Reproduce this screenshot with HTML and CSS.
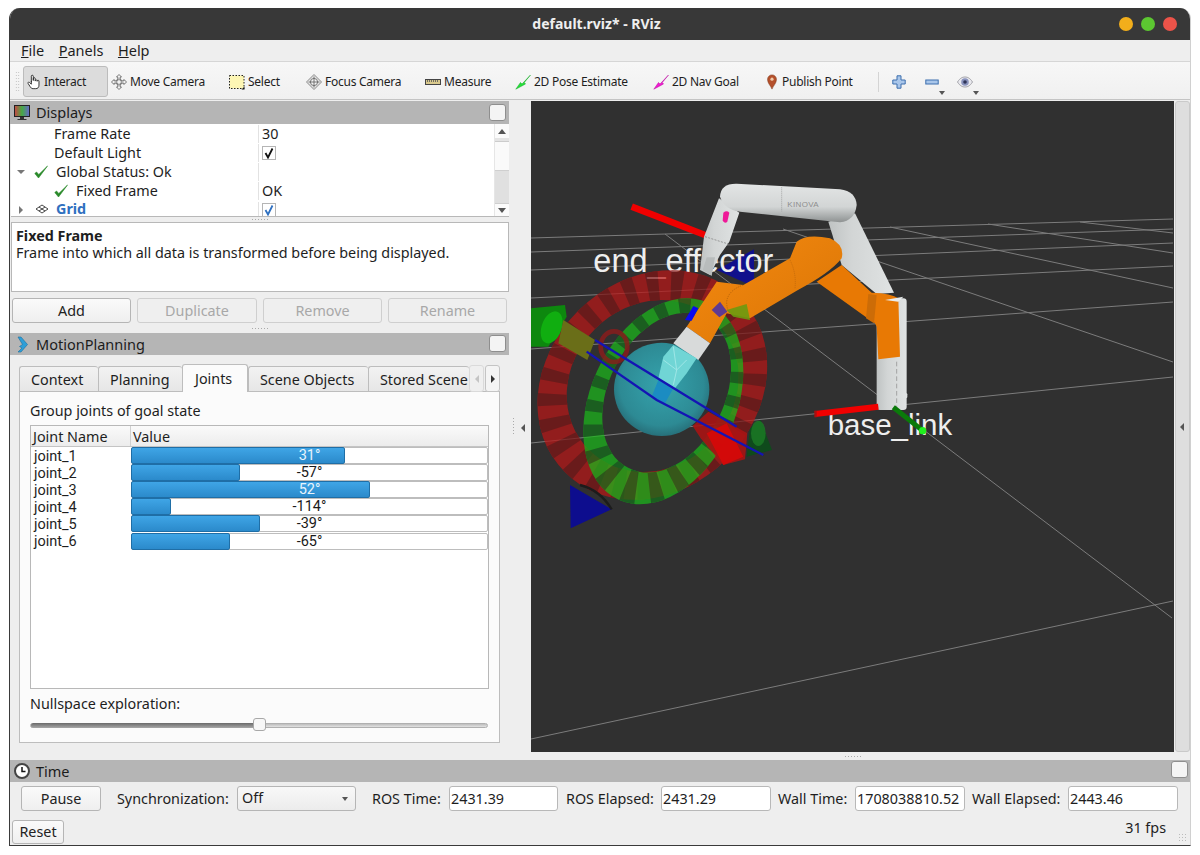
FILE: index.html
```html
<!DOCTYPE html>
<html lang="en">
<head>
<meta charset="utf-8">
<title>default.rviz* - RViz</title>
<link rel="stylesheet" href="styles.css">
</head>
<body>
<div class="window">
  <header class="titlebar">
    <span class="title">default.rviz* - RViz</span>
    <span class="lights"><i class="light amber"></i><i class="light green"></i><i class="light red"></i></span>
  </header>
  <nav class="menubar">
    <span class="menu"><u>F</u>ile</span><span class="menu"><u>P</u>anels</span><span class="menu"><u>H</u>elp</span>
  </nav>
  <div class="toolbar">
    <div class="grip"></div>
    <div class="tools">
      <div class="tool active">
        <svg class="ico" viewBox="0 0 16 18"><path d="M5 9V2.500a1.100 1.100 0 0 1 2.200 0V7.500M7.200 7V5.300a1.100 1.100 0 0 1 2.200 0V8M9.400 7.400a1.100 1.100 0 0 1 2.100 0V8.500M11.500 7.800a1.100 1.100 0 0 1 2.100 0V12.500C13.600 15 12.300 16.500 10 16.500H7C5.200 16.500 4.500 15.500 3.500 14L1.300 10.500C.800 9.500 2 8.600 3 9.500L5 11.500V8" fill="#fff" stroke="#222" stroke-width="1"/></svg>
        <span>Interact</span>
      </div>
      <div class="tool">
        <svg class="ico" viewBox="0 0 16 16"><path d="M8 .5 10.500 3H9.200V6.800H13V5.500L15.500 8 13 10.500V9.200H9.200V13H10.500L8 15.500 5.500 13H6.800V9.200H3V10.500L.5 8 3 5.500V6.800H6.800V3H5.500Z" fill="#f2f2f2" stroke="#6a6a6a" stroke-width=".9"/><circle cx="8" cy="8" r="3" fill="none" stroke="#777" stroke-width=".8"/></svg>
        <span>Move Camera</span>
      </div>
      <div class="tool">
        <svg class="ico" viewBox="0 0 16 16"><rect x=".5" y="1.500" width="14.500" height="13" fill="#fdf6b4" stroke="#222" stroke-dasharray="1.500 1.500"/><path d="M12.500 15.500 15.500 15.500 15.500 12.500Z" fill="#111"/></svg>
        <span>Select</span>
      </div>
      <div class="tool">
        <svg class="ico" viewBox="0 0 16 16"><path d="M8 .5 15.500 8 8 15.500 .5 8Z" fill="#e6e6e6" stroke="#8a8a8a"/><circle cx="8" cy="8" r="3.600" fill="#f6f6f6" stroke="#777"/><path d="M8 2.500V13.500M2.500 8H13.500" stroke="#666" stroke-width=".9"/></svg>
        <span>Focus Camera</span>
      </div>
      <div class="tool">
        <svg class="ico" viewBox="0 0 16 16"><rect x=".5" y="5.500" width="15" height="5" fill="#d9c98d" stroke="#444"/><path d="M2.500 6V8M4.500 6V8M6.500 6V8M8.500 6V8M10.500 6V8M12.500 6V8" stroke="#555" stroke-width=".8"/></svg>
        <span>Measure</span>
      </div>
      <div class="tool">
        <svg class="ico" viewBox="0 0 16 16"><path d="M.8 15.200 5.500 8.500 7 10 15.500 1 9.300 8.500 10.500 10Z" fill="#25e03a" stroke="#14a826" stroke-width=".5"/></svg>
        <span>2D Pose Estimate</span>
      </div>
      <div class="tool">
        <svg class="ico" viewBox="0 0 16 16"><path d="M.8 15.200 5.500 8.500 7 10 15.500 1 9.300 8.500 10.500 10Z" fill="#f01ad0" stroke="#b90ca0" stroke-width=".5"/></svg>
        <span>2D Nav Goal</span>
      </div>
      <div class="tool pin">
        <svg class="ico" viewBox="0 0 16 18"><path d="M8 17C6.500 13 3 10.500 3 6a5 5 0 0 1 10 0C13 10.500 9.500 13 8 17Z" fill="#b5502b" stroke="#7e3618" stroke-width=".6"/><circle cx="8" cy="5.800" r="1.800" fill="#f0c9a8"/></svg>
        <span>Publish Point</span>
      </div>
    </div>
    <div class="sep"></div>
    <svg class="mini plus" viewBox="0 0 14 14"><path d="M5 .8H9V5H13.200V9H9V13.200H5V9H.8V5H5Z" fill="#a9c6ea" stroke="#3d6fae"/></svg>
    <div class="dropwrap">
      <svg class="mini" viewBox="0 0 14 14"><rect x=".8" y="5" width="12.400" height="4" fill="#a9c6ea" stroke="#3d6fae"/></svg>
      <i class="drop"></i>
    </div>
    <div class="dropwrap eyewrap">
      <svg class="mini eye" viewBox="0 0 16 14"><path d="M.5 7C3 3 5.500 2 8 2s5 1 7.500 5c-2.500 4-5 5-7.500 5S3 11 .5 7Z" fill="#e9e9ee" stroke="#a2a2a8"/><circle cx="8" cy="7" r="3.800" fill="#8993bd"/><circle cx="8" cy="7" r="1.800" fill="#2e3357"/></svg>
      <i class="drop"></i>
    </div>
  </div>

  <div class="main">
    <aside class="leftcol">
      <div class="dockhead head-displays">
        <svg class="headico" viewBox="0 0 16 16"><defs><linearGradient id="rainbow" x1="0" x2="1" y1="0" y2="0"><stop offset="0" stop-color="#c44"/><stop offset=".5" stop-color="#4a4"/><stop offset="1" stop-color="#66c"/></linearGradient></defs><rect x=".5" y=".5" width="15" height="11" fill="url(#rainbow)" stroke="#222"/><path d="M6 12V14H3.500V15H12.500V14H10V12Z" fill="#333"/></svg>
        <span>Displays</span><i class="floatbox"></i>
      </div>
      <div class="tree">
        <div class="treebody">
          <div class="trow"><div class="tname ind1">Frame Rate</div><div class="tval">30</div></div>
          <div class="trow"><div class="tname ind1">Default Light</div><div class="tval"><i class="check"><svg viewBox="0 0 12 12"><path d="M2.500 6 5 10.500 9.500 1.500" fill="none" stroke="#111" stroke-width="1.800"/></svg></i></div></div>
          <div class="trow"><div class="tname"><i class="arrow-down"></i><svg class="ok first" viewBox="0 0 14 14"><path d="M.8 8.500 4.500 13 13.500 1 4.800 9.500 2.500 7Z" fill="#2a8a2a" stroke="#2a8a2a" stroke-width=".6"/></svg><span>Global Status: Ok</span></div><div class="tval"></div></div>
          <div class="trow"><div class="tname"><svg class="ok second" viewBox="0 0 14 14"><path d="M.8 8.500 4.500 13 13.500 1 4.800 9.500 2.500 7Z" fill="#2a8a2a" stroke="#2a8a2a" stroke-width=".6"/></svg><span>Fixed Frame</span></div><div class="tval">OK</div></div>
          <div class="trow clip"><div class="tname"><i class="arrow-right"></i><svg class="gridico" viewBox="0 0 14 10"><path d="M7 1 13 5 7 9 1 5ZM4 3 10 7M10 3 4 7" fill="none" stroke="#333" stroke-width=".9"/></svg><b class="link">Grid</b></div><div class="tval"><i class="check"><svg viewBox="0 0 12 12"><path d="M2.500 6 5 10.500 9.500 1.500" fill="none" stroke="#2f70c0" stroke-width="1.800"/></svg></i></div></div>
        </div>
        <div class="vscroll">
          <i class="sb-up"></i><i class="sb-track"></i><i class="sb-thumb"></i><i class="sb-fill"></i><i class="sb-down"></i>
        </div>
      </div>
      <div class="split5"><i class="dots"></i></div>
      <div class="desc"><strong>Fixed Frame</strong><br>Frame into which all data is transformed before being displayed.</div>
      <div class="btnrow">
        <div class="btn">Add</div><div class="btn off">Duplicate</div><div class="btn off">Remove</div><div class="btn off">Rename</div>
      </div>
      <div class="split10"><i class="dots"></i></div>
      <div class="dockhead head-motion">
        <svg class="headico motion" viewBox="0 0 12 17"><path d="M1 1H4L10.500 8.500 4 16H1L5 12 2.500 10.500 5.500 8.500Z" fill="#2f9fd8" stroke="#1b6f9e" stroke-width=".6"/></svg>
        <span>MotionPlanning</span><i class="floatbox"></i>
      </div>
      <div class="tabwrap">
        <div class="tabs">
          <div class="tab t1">Context</div><div class="tab t2">Planning</div><div class="tab sel t3">Joints</div><div class="tab t4">Scene Objects</div><div class="tab t5">Stored Scene</div>
          <div class="tabnav dim"><i class="tri-l"></i></div><div class="tabnav"><i class="tri-r"></i></div>
        </div>
        <div class="pane">
          <div class="grouplabel">Group joints of goal state</div>
          <div class="table">
            <div class="thead"><div class="th c1">Joint Name</div><div class="th">Value</div></div>
            <div class="jrow"><div class="jname">joint_1</div><div class="bar light"><div class="fill" style="width:60.300%"></div><span>31°</span></div></div>
            <div class="jrow"><div class="jname">joint_2</div><div class="bar"><div class="fill" style="width:30.800%"></div><span>-57°</span></div></div>
            <div class="jrow"><div class="jname">joint_3</div><div class="bar light"><div class="fill" style="width:67.200%"></div><span>52°</span></div></div>
            <div class="jrow"><div class="jname">joint_4</div><div class="bar"><div class="fill" style="width:11.400%"></div><span>-114°</span></div></div>
            <div class="jrow"><div class="jname">joint_5</div><div class="bar"><div class="fill" style="width:36.200%"></div><span>-39°</span></div></div>
            <div class="jrow"><div class="jname">joint_6</div><div class="bar"><div class="fill" style="width:28%"></div><span>-65°</span></div></div>
          </div>
          <div class="nulllabel">Nullspace exploration:</div>
          <div class="slider"><div class="slide-on"></div><div class="slide-knob"></div></div>
        </div>
      </div>
    </aside>

    <div class="gutter"><i class="vdots"></i><i class="tri-l"></i></div>

    <div class="viewcol">
      <div class="viewport">
        <svg class="scene" viewBox="0 0 643 651">
          <defs>
            <linearGradient id="grayA" x1="0" y1="0" x2="0" y2="1"><stop offset="0" stop-color="#e3e5e5"/><stop offset=".6" stop-color="#d2d5d5"/><stop offset="1" stop-color="#8e9292"/></linearGradient>
            <linearGradient id="grayB" x1="0" y1="0" x2="1" y2="0"><stop offset="0" stop-color="#bfc3c3"/><stop offset=".35" stop-color="#d2d5d5"/><stop offset="1" stop-color="#e0e3e3"/></linearGradient>
            <linearGradient id="orangeA" x1="0" y1="0" x2="1" y2="1"><stop offset="0" stop-color="#f58a10"/><stop offset="1" stop-color="#d97405"/></linearGradient>
            <radialGradient id="ball" cx=".5" cy=".45" r=".55"><stop offset="0" stop-color="#35a3ad"/><stop offset=".8" stop-color="#2d8a94"/><stop offset="1" stop-color="#27707a"/></radialGradient>
            <clipPath id="redclip"><path clip-rule="evenodd" d="M628.600 383.400A370 310 -45 1 0 105.400 906.600A370 310 -45 1 0 628.600 383.400ZM558.900 457.100A270 240 -45 1 1 177.100 838.900A270 240 -45 1 1 558.900 457.100Z"/></clipPath>
            <clipPath id="greenclip"><path clip-rule="evenodd" d="M534 398.400A324.500 218.600 -65.600 1 0 266 989.600A324.500 218.600 -65.600 1 0 534 398.400ZM525.200 442.800A253 170 -62.900 1 1 294.800 893.200A253 170 -62.900 1 1 525.200 442.800Z"/></clipPath>
          </defs>
          <g class="gridlines" transform="translate(-531 -101)">
            <path d="M531 238 1173 219M531 252 1173 229M531 270 1173 243M531 298 1173 266M531 349 1173 302M531 443 1173 377M531 739 1173 601M1080 222 1173 233M988 224 1173 253M890 227 1173 288M783 229 1173 362M665 234 1172 618"/>
          </g>
          <g transform="translate(-1 69) scale(.33333)">
            <path d="M560 300 672 238 672 350Z" fill="#10108c"/>
            <text class="lbl big" x="190" y="306">end_effector</text>
            <path d="M305 110 525 195" stroke="#f00000" stroke-width="20" fill="none"/>
            <ellipse cx="395" cy="658" rx="143" ry="140" fill="url(#ball)"/>
            <g opacity=".72">
              <path fill-rule="evenodd" fill="#b81616" d="M628.600 383.400A370 310 -45 1 0 105.400 906.600A370 310 -45 1 0 628.600 383.400ZM558.900 457.100A270 240 -45 1 1 177.100 838.900A270 240 -45 1 1 558.900 457.100Z"/>
              <g clip-path="url(#redclip)">
                <ellipse cx="367" cy="646" rx="320" ry="275" transform="rotate(-45 367 646)" fill="none" stroke="#7f1414" stroke-width="130" stroke-dasharray="34 36"/>
              </g>
            </g>
            <g opacity=".72">
              <path fill-rule="evenodd" fill="#1ab81a" d="M534 398.400A324.500 218.600 -65.600 1 0 266 989.600A324.500 218.600 -65.600 1 0 534 398.400ZM525.200 442.800A253 170 -62.900 1 1 294.800 893.200A253 170 -62.900 1 1 525.200 442.800Z"/>
              <g clip-path="url(#greenclip)">
                <ellipse cx="405" cy="680" rx="288" ry="194" transform="rotate(-64 405 680)" fill="none" stroke="#14701a" stroke-width="110" stroke-dasharray="34 38"/>
              </g>
            </g>
            <ellipse cx="252" cy="530" rx="40" ry="46" fill="none" stroke="#931a1a" stroke-width="14" opacity=".75"/>
            <!-- grey arm -->
            <path d="M895 155 975 130 1092 368 1040 372 935 285Z" fill="url(#grayB)"/>
            <path d="M567 85 628 128 598 215 570 255 540 315 510 300 522 200Z" fill="url(#grayB)"/>
            <path d="M570 80Q572 40 620 41L930 58Q978 65 980 105Q975 152 930 157L900 154 630 125Q582 118 570 80Z" fill="url(#grayA)"/>
            <path d="M755 52V125" stroke="#8a8a8a" stroke-width="2" stroke-dasharray="3 3"/>
            <text class="lasered" x="772" y="110">KINOVA</text>
            <path d="M580 128Q590 120 598 128L592 155Q585 162 578 152Z" fill="#ee1a98"/>
            <path d="M525 200 595 222" stroke="#777" stroke-width="2" stroke-dasharray="6 4"/>
            <path d="M518 300 530 262 555 262 545 318Z" fill="#b8bcbc"/>
            <rect x="1040" y="385" width="90" height="335" rx="10" fill="url(#grayB)"/>
            <rect x="1118" y="670" width="14" height="14" rx="3" fill="#dfe2e2"/>
            <path d="M1100 575V715" stroke="#888" stroke-width="2" stroke-dasharray="14 8"/>
            <!-- orange arm -->
            <path d="M935 285 1025 368Q1085 370 1105 385L1110 560 1045 568 1040 470Q1035 455 1020 450L860 335Z" fill="#e87904"/>
            <path d="M1015 372 1040 376 1032 460 1008 445Z" fill="#cc6c07"/>
            <path d="M1065 390 1120 380 1105 395Z" fill="#e9ecec"/>
            <path d="M800 215Q830 190 900 205Q945 225 935 265Q900 310 800 362L660 445 590 430 540 520 470 470 560 335 640 345 780 265 790 240Z" fill="url(#orangeA)"/>
            <path d="M780 270Q800 310 795 355" stroke="#b5620b" stroke-width="2" fill="none" stroke-dasharray="3 3"/>
            <path d="M640 345Q595 360 590 395Q590 420 600 430" stroke="#a85a0b" stroke-width="2" fill="none" stroke-dasharray="4 3"/>
            <path d="M470 470 540 520 505 570 430 520Z" fill="#d8dada"/>
            <!-- gripper -->
            <path d="M365 680 385 630 430 655 405 700Z" fill="#1b8cc2"/>
            <path d="M385 625 400 560 430 525 500 565 470 610 435 655Z" fill="#70d5d5"/>
            <path d="M400 570 440 600 470 570M430 530 440 600 430 645" stroke="#9fe6e6" stroke-width="3" fill="none"/>
            <path d="M545 420 570 395 592 425 568 442Z" fill="#5e3b92"/>
            <path d="M465 450 490 408 505 415 485 452Z" fill="#0a0af0"/>
            <path d="M590 420 650 402 660 450 610 440Z" fill="#6c9a10" opacity=".9"/>
            <!-- gizmo arrows -->
            <path d="M0 415 105 405 110 440 55 530 0 530Z" fill="#0d880e"/>
            <ellipse cx="65" cy="472" rx="30" ry="50" transform="rotate(20 65 472)" fill="#10ae10"/>
            <path d="M100 450 195 510 172 570 85 520Z" fill="#6a6e18"/>
            <path d="M660 775 692 750 726 840 650 860Z" fill="#0f4a1c"/>
            <ellipse cx="685" cy="790" rx="22" ry="38" fill="#1b7c25" opacity=".8"/>
            <path d="M488 768 535 725 652 790 645 868 580 885 512 805Z" fill="#a81414" opacity=".9"/>
            <path d="M530 790 590 760 640 860 580 885Z" fill="#d80808" opacity=".9"/>
            <path d="M195 510 620 770M170 545 380 690 700 855" stroke="#1414b4" stroke-width="7" fill="none"/>
            <path d="M120 945 245 1018 122 1075Z" fill="#0d0d8e"/>
            <path d="M150 945Q210 960 245 1018" stroke="#1c1c1c" stroke-width="7" fill="none"/>
            <!-- base frame -->
            <text class="lbl small" x="893" y="796">base_link</text>
            <path d="M855 732 1045 710" stroke="#f00000" stroke-width="18" fill="none"/>
            <path d="M853 722H860V742H853Z" fill="#a81010"/>
            <path d="M1090 712 1178 782" stroke="#0a7a0a" stroke-width="15" fill="none"/>
            <circle cx="1178" cy="782" r="11" fill="#1fef1f"/>
          </g>
        </svg>
      </div>
      <div class="viewfoot"><i class="dots"></i></div>
    </div>

    <div class="rightbar"><i class="tri-l"></i></div>
  </div>

  <div class="dockhead head-time">
    <svg class="headico clock" viewBox="0 0 16 16"><circle cx="8" cy="8" r="7" fill="#fff" stroke="#444" stroke-width="2"/><path d="M8 4V8.500H11.500" fill="none" stroke="#111" stroke-width="1.500"/></svg>
    <span>Time</span><i class="floatbox"></i>
  </div>
  <div class="timerow">
    <div class="btn pause">Pause</div>
    <label class="tl sync">Synchronization:</label>
    <div class="combo">Off<i class="drop"></i></div>
    <label class="tl rostime">ROS Time:</label><div class="input w109">2431.39</div>
    <label class="tl roselapsed">ROS Elapsed:</label><div class="input">2431.29</div>
    <label class="tl walltime">Wall Time:</label><div class="input">1708038810.52</div>
    <label class="tl wallelapsed">Wall Elapsed:</label><div class="input">2443.46</div>
  </div>
  <div class="statusrow">
    <div class="btn reset">Reset</div>
    <div class="fps">31 fps</div>
    <i class="sizegrip"></i>
  </div>
</div>
</body>
</html>
```
FILE: styles.css
```css
* { box-sizing: border-box; }
html, body { margin: 0; padding: 0; background: #fff; }
body { font: 14.350px/1 "Noto Sans", "Open Sans", sans-serif; color: #1e1e1e; width: 1200px; height: 855px; overflow: hidden; }
i { font-style: normal; display: block; }

.window { margin: 8px 0 0 9px; width: 1182px; height: 838px; background: #eeeeee; border-left: 1px solid #3a3a3a; border-bottom: 1px solid #3a3a3a; border-right: 1px solid #d0d0d0; border-radius: 11px 11px 0 0; display: flex; flex-direction: column; overflow: hidden; }

.titlebar { flex: 0 0 32px; background: #383838; position: relative; display: flex; align-items: center; justify-content: center; margin-left: -1px; }
.title { color: #efefef; font-weight: 700; font-size: 14px; margin-right: 6px; }
.lights { position: absolute; right: 13px; top: 9px; display: flex; gap: 8px; }
.light { width: 14px; height: 14px; border-radius: 50%; }
.amber { background: #f2ae1b; }
.green { background: #5cc731; }
.red { background: #ec5349; }

.menubar { flex: 0 0 22px; background: #eeeeee; border-bottom: 1px solid #d6d6d6; display: flex; padding-left: 11px; gap: 14.500px; align-items: center; }
.menu { font-size: 14.500px; }

.toolbar { flex: 0 0 38px; padding-top: 2px; background: linear-gradient(#f7f7f7, #f0f0f0); border-bottom: 1px solid #c4c4c4; display: flex; align-items: center; position: relative; }
.grip { width: 5px; height: 22px; margin-left: 5px; background-image: radial-gradient(#bbbbbb 35%, transparent 40%); background-size: 2.500px 3px; }
.tools { margin-left: 3px; display: grid; grid-template-columns: 85px 118px 77px 119px 90px 138px 112px 115px; height: 31px; }
.tool { display: flex; align-items: center; padding-left: 3px; gap: 3px; font-size: 12px; letter-spacing: -.25px; white-space: nowrap; }
.tool.active { background: #dcdcdc; border: 1px solid #bcbcbc; border-radius: 3px; padding-left: 2px; gap: 2px; }
.tool.pin { padding-left: 2px; gap: 2px; }
.ico { width: 16px; height: 16px; flex: none; }
.sep { width: 1px; height: 20px; background: #d4d4d4; margin-left: 1px; }
.mini { width: 14px; height: 14px; display: block; }
.plus { margin-left: 13px; }
.dropwrap { position: relative; margin-left: 19px; }
.eyewrap { margin-left: 18px; }
.eye { width: 16px; }
.drop { width: 0; height: 0; border-left: 3px solid transparent; border-right: 3px solid transparent; border-top: 4px solid #555; }
.dropwrap .drop { position: absolute; right: -6px; bottom: -6px; }

.main { flex: 0 0 659px; display: flex; margin-top: 1px; }
.leftcol { width: 499px; display: flex; flex-direction: column; }

.dockhead { background: #b5b5b5; display: flex; align-items: center; position: relative; font-size: 14.500px; color: #1c1c1c; }
.head-displays { height: 23px; padding-left: 4px; }
.head-motion { height: 22px; padding-left: 7px; }
.head-time { flex: 0 0 22px; padding-left: 2px; }
.headico { width: 16px; height: 16px; flex: none; margin-right: 6px; }
.headico.motion { width: 12px; height: 17px; margin-right: 7px; }
.headico.clock { margin-right: 6px; margin-left: 2px; }
.floatbox { position: absolute; right: 3px; top: 3px; width: 17px; height: 17px; background: #f4f4f4; border: 1px solid #8e8e8e; border-radius: 3px; }
.head-motion .floatbox { top: 2px; }
.head-time .floatbox { top: 1px; right: 2px; }

.tree { height: 93px; background: #fff; display: flex; margin-left: 1px; border-bottom: 1px solid #b8b8b8; }
.treebody { width: 483px; }
.trow { display: flex; height: 19px; padding-top: 1px; align-items: center; }
.trow.clip { height: 16px; padding-top: 2px; }
.trow.clip .tval { overflow: hidden; align-items: flex-start; padding-top: 1px; }
.tname { width: 248px; height: 100%; display: flex; align-items: center; position: relative; border-right: 1px solid #e2e2e2; white-space: nowrap; }
.ind1 { padding-left: 43px; }
.tval { padding-left: 3px; height: 100%; display: flex; align-items: center; }
.check { width: 14px; height: 14px; border: 1px solid #b5b5b5; background: #fff; }
.check svg { display: block; width: 12px; height: 12px; }
.ok { width: 14px; height: 14px; flex: none; }
.ok.first { margin-left: 23px; margin-right: 8px; }
.ok.second { margin-left: 43px; margin-right: 8px; }
.arrow-down { position: absolute; left: 6px; top: 7px; width: 0; height: 0; border-left: 4px solid transparent; border-right: 4px solid transparent; border-top: 4px solid #777; }
.arrow-right { position: absolute; left: 8px; top: 4px; width: 0; height: 0; border-top: 4px solid transparent; border-bottom: 4px solid transparent; border-left: 4px solid #777; }
.gridico { width: 14px; height: 10px; margin-left: 24px; margin-right: 7px; flex: none; }
.link { color: #2f70c0; font-weight: 700; }

.vscroll { width: 15px; border-left: 1px solid #e6e6e6; display: flex; flex-direction: column; align-items: center; background: #fbfbfb; }
.sb-up { width: 0; height: 0; margin: 5px 0 4px; border-left: 4px solid transparent; border-right: 4px solid transparent; border-bottom: 5px solid #555; }
.sb-track { width: 100%; height: 4px; background: #e4e4e4; border-bottom: 1px solid #ccc; }
.sb-thumb { width: 100%; height: 28px; background: #fafafa; }
.sb-fill { width: 100%; height: 34px; background: #e0e0e0; border-top: 1px solid #cfcfcf; border-bottom: 1px solid #cfcfcf; }
.sb-down { width: 0; height: 0; margin-top: 4px; border-left: 4px solid transparent; border-right: 4px solid transparent; border-top: 5px solid #555; }

.split5 { height: 5px; display: flex; justify-content: center; align-items: center; }
.split10 { height: 10px; display: flex; justify-content: center; align-items: center; }
.dots { width: 16px; height: 1px; background-image: repeating-linear-gradient(90deg, #aaa 0 1px, transparent 1px 3px); }

.desc { height: 70px; margin-left: 1px; background: #fff; border: 1px solid #b8b8b8; padding: 4px 4px; line-height: 17px; }
.desc strong { font-weight: 700; }

.btnrow { display: grid; grid-template-columns: 119px 120px 119px 119px; gap: 6px; margin: 6px 0 0 2px; height: 25px; }
.btn { border: 1px solid #b5b5b5; border-radius: 3px; background: linear-gradient(#fafafa, #efefef); display: flex; align-items: center; justify-content: center; color: #222; padding-top: 1px; }
.btn.off { color: #a8a8a8; background: #efefef; border-color: #cfcfcf; }

.tabwrap { padding: 10px 0 0 9px; display: flex; flex-direction: column; }
.tabs { display: flex; height: 27px; position: relative; z-index: 1; }
.tab { height: 26px; margin-top: 1px; padding-top: 2px; background: linear-gradient(#f2f2f2, #e6e6e6); border: 1px solid #bdbdbd; border-right: 0; display: flex; align-items: center; white-space: nowrap; overflow: hidden; padding-left: 11px; border-radius: 3px 3px 0 0; }
.t1 { width: 79px; }
.t2 { width: 84px; }
.t3 { width: 66px; height: 28px; margin-top: -1px; padding-top: 2px; background: #fbfbfb; border-right: 1px solid #bdbdbd; border-bottom: 0; padding-left: 12px; position: relative; z-index: 2; }
.t4 { width: 120px; padding-left: 11px; }
.t5 { width: 101px; padding-left: 11px; }
.tabnav { width: 15px; height: 27px; background: #f4f4f4; border: 1px solid #c4c4c4; border-radius: 3px; display: flex; align-items: center; justify-content: center; }
.tabnav.dim { background: #efefef; border-color: #dadada; margin-right: 1px; }
.tabnav.dim .tri-l { border-right-color: #c4c4c4; }
.tri-l { width: 0; height: 0; border-top: 4px solid transparent; border-bottom: 4px solid transparent; border-right: 4px solid #555; }
.tri-r { width: 0; height: 0; border-top: 4px solid transparent; border-bottom: 4px solid transparent; border-left: 4px solid #333; }

.pane { height: 352px; width: 481px; background: #fbfbfb; border: 1px solid #bdbdbd; padding: 10px 10px 0; margin-top: -1px; }
.grouplabel { height: 23px; line-height: 18px; }
.table { height: 264px; width: 459px; background: #fff; border: 1px solid #b8b8b8; }
.thead { display: flex; height: 21px; background: linear-gradient(#fafafa, #ececec); border-bottom: 1px solid #c4c4c4; }
.th { padding-left: 2px; line-height: 21px; }
.th.c1 { width: 100px; border-right: 1px solid #d0d0d0; }
.jrow { display: flex; height: 17.100px; align-items: center; }
.jname { width: 100px; padding: 1px 0 0 3px; font: 14.500px Roboto, sans-serif; }
.bar { width: 357px; height: 17px; background: #fff; border: 1px solid #bdbdbd; border-radius: 2px; position: relative; text-align: center; font: 14.500px/16px Roboto, sans-serif; color: #1a1a1a; }
.bar span { position: relative; }
.bar.light { color: #e8f4fc; }
.fill { position: absolute; left: -1px; top: -1px; bottom: -1px; background: linear-gradient(#3fa5e6, #2b8acb); border: 1px solid #1f6ea6; border-radius: 2px; }
.nulllabel { margin-top: 6px; height: 28px; line-height: 18px; }
.slider { height: 5px; width: 458px; background: linear-gradient(#bdbdbd, #e2e2e2); border: 1px solid #b0b0b0; border-radius: 3px; position: relative; }
.slide-on { position: absolute; left: 0; top: -1px; bottom: -1px; width: 226px; background: linear-gradient(#6a6a6a, #a8a8a8); border-radius: 3px; }
.slide-knob { position: absolute; left: 222px; top: -6px; width: 13px; height: 13px; background: #f7f7f7; border: 1px solid #a8a8a8; border-radius: 3px; }

.gutter { width: 22px; display: flex; align-items: center; justify-content: center; position: relative; }
.gutter .vdots { position: absolute; left: 4px; top: 317px; width: 1px; height: 18px; background-image: repeating-linear-gradient(#aaa 0 1px, transparent 1px 3px); }
.gutter .tri-l { margin: 0 0 5px 6px; }
.viewcol { width: 644px; display: flex; flex-direction: column; align-items: center; }
.viewport { width: 643px; height: 651px; background: #303030; overflow: hidden; align-self: flex-start; }
.viewfoot { height: 8px; display: flex; align-items: center; justify-content: center; }
.scene { display: block; width: 643px; height: 651px; }
.gridlines path { stroke: #7c7c7c; stroke-width: 1; fill: none; }
.lbl { fill: #eeeeee; font-family: "Liberation Sans", sans-serif; }
.lbl.big { font-size: 97.500px; }
.lbl.small { font-size: 88.500px; }
.lasered { font: 24px "Liberation Sans", sans-serif; fill: #8e8e8e; letter-spacing: 1px; }

.rightbar { width: 15px; height: 651px; background: #dedede; border: 1px solid #cacaca; border-radius: 3px; display: flex; align-items: center; justify-content: center; padding-right: 2px; }

.timerow { flex: 0 0 35px; display: flex; align-items: center; padding: 4px 0 6px 11px; }
.tl { white-space: nowrap; height: 25px; line-height: 25px; }
.pause { width: 80px; height: 25px; }
.sync { margin-left: 16px; width: 120px; }
.rostime { margin-left: 16px; width: 77px; }
.roselapsed { margin-left: 8px; width: 95px; }
.walltime { margin-left: 7px; width: 77px; }
.wallelapsed { margin-left: 7px; width: 96px; }
.combo { width: 119px; height: 25px; border: 1px solid #b5b5b5; border-radius: 3px; background: linear-gradient(#f8f8f8, #ececec); display: flex; align-items: center; justify-content: space-between; padding: 0 7px 0 4px; }
.input { width: 110px; height: 25px; background: #fff; border: 1px solid #b8b8b8; border-radius: 3px; line-height: 23px; padding-left: 1px; white-space: nowrap; overflow: hidden; }
.input.w109 { width: 109px; }

.statusrow { flex: 1; display: flex; justify-content: space-between; position: relative; padding: 3px 24px 0 2px; }
.reset { width: 52px; height: 24px; }
.fps { margin-top: 1px; }
.sizegrip { position: absolute; right: 2px; bottom: 2px; width: 10px; height: 10px; background-image: radial-gradient(#bbb 35%, transparent 40%); background-size: 3px 3px; }
```
